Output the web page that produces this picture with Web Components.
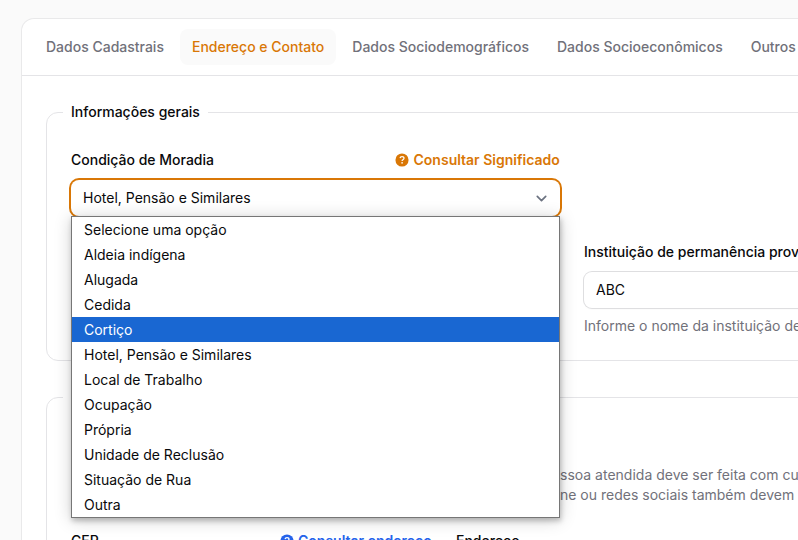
<!DOCTYPE html>
<html lang="pt-BR">
<head>
<meta charset="utf-8">
<title>Endereço e Contato</title>
<style>
html,body{margin:0;height:540px;overflow:hidden;background:#fafafa}
body{font:400 14px/20px Inter,"Liberation Sans",sans-serif;color:#09090b;width:798px}
</style>
</head>
<body>
<app-page></app-page>
<script>
function define(name, markup, setup) {
  const template = document.createElement('template');
  template.innerHTML = '<style>*{box-sizing:border-box}</style>' + markup;
  customElements.define(name, class extends HTMLElement {
    connectedCallback() {
      if (this.shadowRoot) return;
      const root = this.attachShadow({ mode: 'open' });
      root.append(template.content.cloneNode(true));
      if (setup) setup(this, root);
    }
  });
}

define('tab-item', `<style>
:host{display:block;flex:none;padding:8px 12px;border-radius:8px;font-weight:500;color:#71717a;white-space:nowrap}
:host([active]){background:#fafafa;color:#d97706}
</style><slot></slot>`);

define('tab-bar', `<style>
:host{display:flex;gap:4px;padding:10px 12px;border-bottom:1px solid #e4e4e7}
</style><slot></slot>`);

define('field-group', `<style>
:host{display:block}
fieldset{margin:0;padding:24px;border:1px solid #e4e4e7;border-radius:12px;min-width:0}
legend{margin-left:-8px;padding:0 8px;font-weight:500;line-height:24px}
</style><fieldset><legend><slot name="legend"></slot></legend><slot></slot></fieldset>`);

define('help-link', `<style>
:host{display:flex;align-items:center;gap:4.5px;font-weight:600;color:#d97706;white-space:nowrap;padding-right:.25px}
:host([tone=blue]){color:#2563eb}
svg{width:14px;height:14px;flex:none}
</style><svg viewBox="0 0 512 512" fill="currentColor"><path d="M256 16a240 240 0 1 0 0 480 240 240 0 1 0 0-480Z"/><path d="M184 188c7-36 33-55 72-55 42 0 73 24 73 61 0 48-54 51-67 81v16" fill="none" stroke="#fff" stroke-width="46"/><circle cx="259" cy="358" r="31" fill="#fff"/></svg><slot></slot>`);

define('form-field', `<style>
:host{display:grid;gap:8px;min-width:0;align-content:start;position:relative}
.label{display:flex;justify-content:space-between;align-items:center;height:24px;font-weight:500;white-space:nowrap}
</style><div class="label"><slot name="label"></slot><slot name="hint"></slot></div><slot></slot>`);

define('text-box', `<style>
:host{display:flex;align-items:center;height:36px;padding:0 12px;border-radius:8px;background:#fff;box-shadow:0 0 0 1px #dedee0,0 1px 2px 0 #0000000d}
</style><slot></slot>`);

define('select-box', `<style>
:host{display:flex;align-items:center;justify-content:space-between;height:36px;padding:0 12px;border-radius:8px;background:#fff;box-shadow:0 0 0 2px #d97706}
svg{width:14px;height:14px}
</style><slot></slot><svg viewBox="0 0 14 14" fill="none" stroke="#6b7280" stroke-width="1.7" stroke-linecap="round" stroke-linejoin="round"><path d="M3.3 5.4l4.2 4.2L11.7 5.4"/></svg>`);

define('option-list', `<style>
:host{display:block;position:absolute;top:68px;left:0;right:0;z-index:5;border:1px solid #767676;background:#fff;box-shadow:1px 3px 5px 0 #00000038,0 2px 16px 0 #00000030}
.option{height:25px;line-height:25px;padding-left:12px;color:#09090b}
.current{background:#1967d2;color:#fff}
</style>`, (host, root) => {
  const options = ['Selecione uma opção', 'Aldeia indígena', 'Alugada', 'Cedida', 'Cortiço', 'Hotel, Pensão e Similares', 'Local de Trabalho', 'Ocupação', 'Própria', 'Unidade de Reclusão', 'Situação de Rua', 'Outra'];
  for (const text of options) {
    const row = document.createElement('div');
    row.className = text === 'Cortiço' ? 'option current' : 'option';
    row.textContent = text;
    root.append(row);
  }
});

define('app-page', `<style>
:host{display:block;width:798px;height:540px;overflow:hidden;padding:19px 0 0 22px}
.card{width:1153px;height:900px;background:#fff;border-radius:12px;box-shadow:0 0 0 1px #e9e9ea}
.content{display:grid;gap:24px;padding:24px}
.two{display:grid;grid-template-columns:489px 489px;gap:24px}
.two .second{grid-column:2;grid-row:2}
.muted{color:#71717a;white-space:nowrap}
.note{padding:32px 0 24px 489px}
.note div{height:20px}
.three{display:grid;grid-template-columns:361px 361px;gap:24px}
</style>
<div class="card">
  <tab-bar><tab-item>Dados Cadastrais</tab-item><tab-item active>Endereço e Contato</tab-item><tab-item>Dados Sociodemográficos</tab-item><tab-item>Dados Socioeconômicos</tab-item><tab-item>Outros</tab-item></tab-bar>
  <div class="content">
    <field-group><span slot="legend">Informações gerais</span>
      <div class="two">
        <form-field><span slot="label">Condição de Moradia</span><help-link slot="hint">Consultar Significado</help-link>
          <select-box>Hotel, Pensão e Similares</select-box>
          <option-list></option-list>
        </form-field>
        <form-field class="second"><span slot="label">Instituição de permanência prov</span>
          <text-box>ABC</text-box>
          <div class="muted">Informe o nome da instituição de</div>
        </form-field>
      </div>
    </field-group>
    <field-group><span slot="legend" style="display:block;width:140px;height:24px"></span>
      <div class="note muted"><div>ssoa atendida deve ser feita com cu</div><div>ne ou redes sociais também devem</div></div>
      <div class="three">
        <form-field><span slot="label">CEP</span><help-link slot="hint" tone="blue">Consultar endereço</help-link></form-field>
        <form-field><span slot="label">Endereço</span></form-field>
      </div>
    </field-group>
  </div>
</div>`);
</script>
</body>
</html>
